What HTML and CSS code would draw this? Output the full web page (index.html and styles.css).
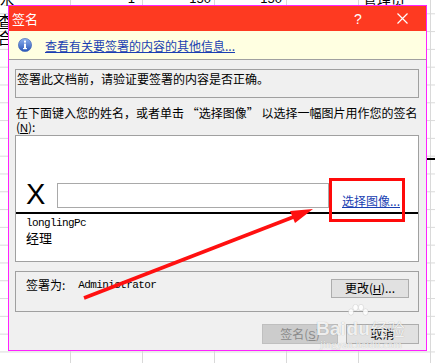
FILE: index.html
```html
<!DOCTYPE html>
<html lang="zh-CN">
<head>
  <meta charset="UTF-8">
  <title>签名</title>
  <link rel="stylesheet" href="styles.css">
</head>
<body>
  <!-- 背景表格 -->
  <div class="sheet">
    <div class="sheet-top">
      <span class="cell c-left">水</span>
      <span class="cell c-right c2">1</span>
      <span class="cell c-right c3">150</span>
      <span class="cell c-right c4">150</span>
      <span class="cell"></span>
      <span class="cell c-left c6">管理员</span>
    </div>
    <div class="sheet-left">
      <span>查</span>
      <span>合</span>
    </div>
  </div>

  <div class="dialog">
    <div class="titlebar">
      <span class="title">签名</span>
      <span class="help">?</span>
      <span class="close">
        <svg width="11" height="11" viewBox="0 0 11 11"><path d="M0.5 0.5 L10.5 10.5 M10.5 0.5 L0.5 10.5" stroke="#fff" stroke-width="1.2" fill="none"/></svg>
      </span>
    </div>
    <div class="infobar">
      <svg class="info-icon" width="14" height="14" viewBox="0 0 14 14">
        <defs>
          <linearGradient id="ig" x1="0" y1="0" x2="0" y2="1">
            <stop offset="0" stop-color="#8fb2ee"/>
            <stop offset="1" stop-color="#2855b8"/>
          </linearGradient>
        </defs>
        <circle cx="7" cy="7" r="6.6" fill="url(#ig)" stroke="#3a62b5" stroke-width="0.6"/>
        <rect x="6" y="2.6" width="2" height="2" fill="#fff"/>
        <rect x="6" y="5.6" width="2" height="5" fill="#fff"/>
        <rect x="5" y="10" width="4" height="1.2" fill="#fff"/>
      </svg>
      <a class="link" href="#">查看有关要签署的内容的其他信息...</a>
    </div>

    <div class="content">
      <div class="notice">签署此文档前，请验证要签署的内容是否正确。</div>
      <div class="prompt">在下面键入您的姓名，或者单击 “选择图像” 以选择一幅图片用作您的签名<br>(<u>N</u>):</div>

      <div class="sigbox">
        <div class="sigline">
          <span class="sig-x">X</span>
          <div class="sig-input"></div>
          <a class="link sig-pick" href="#">选择图像...</a>
        </div>
        <div class="signer-name">longlingPc</div>
        <div class="signer-title">经理</div>
      </div>

      <div class="signas">
        <span class="signas-label">签署为:</span>
        <span class="signas-name">Administrator</span>
        <button class="btn btn-change">更改(<u>H</u>)...</button>
      </div>

      <div class="actions">
        <button class="btn btn-sign" disabled>签名(<u>S</u>)</button>
        <button class="btn btn-cancel">取消</button>
      </div>
    </div>
  </div>

  <!-- 标注 -->
  <div class="callout"></div>
  <svg class="arrow" width="435" height="363" viewBox="0 0 435 363">
    <line x1="84" y1="298" x2="296" y2="216" stroke="#ff1010" stroke-width="3.5"/>
    <polygon points="313,209 290,211 295,223" fill="#ff1010"/>
  </svg>

  <div class="watermark">
    <div class="wm-brand">
      <span class="wm-bai">Bai</span>
      <span class="wm-du-wrap">
        <svg class="wm-paw" width="22" height="16" viewBox="0 0 22 16">
          <ellipse cx="4" cy="8" rx="2.6" ry="3.2"/>
          <ellipse cx="8.5" cy="3.5" rx="2.6" ry="3.2"/>
          <ellipse cx="14" cy="3.5" rx="2.6" ry="3.2"/>
          <ellipse cx="18.5" cy="8" rx="2.6" ry="3.2"/>
        </svg>
        <span class="wm-du">du</span>
      </span>
      <span class="wm-jy">经验</span>
    </div>
    <div class="wm-url">jingyan.baidu.com</div>
  </div>
</body>
</html>
```

FILE: styles.css
```css
/* 基本 */
* {
  box-sizing: border-box;
}
body {
  margin: 0;
  width: 435px;
  height: 363px;
  overflow: hidden;
  position: relative;
  font-family: "Noto Sans CJK SC", sans-serif;
  font-size: 12px;
  color: #000;
  background-color: #fff;
  background-image:
    linear-gradient(#000, #000),
    linear-gradient(to right, #d9d9d9 1px, transparent 1px),
    linear-gradient(to bottom, #d9d9d9 1px, transparent 1px);
  background-size: 9px 2px, 72px 100%, 100% 17.8px;
  background-position: 427px 158px, 70px 0, 0 13.3px;
  background-repeat: no-repeat, repeat-x, repeat-y;
}

/* 背景表格 */
.sheet {
  display: flex;
  flex-direction: column;
  height: 100%;
}
.sheet-top {
  display: flex;
  margin: -8px 0 0 -2px;
  height: 14px;
  line-height: 14px;
  font-size: 14px;
}
.cell {
  flex: none;
  width: 72px;
  white-space: nowrap;
  overflow: hidden;
}
.c-left {
  padding-left: 2px;
}
.c-right {
  text-align: right;
  font-family: "Liberation Sans", sans-serif;
  font-size: 13px;
}
.c2 {
  padding-right: 7px;
}
.c3 {
  padding-right: 3px;
}
.c4 {
  padding-right: 4px;
}
.c6 {
  padding-left: 5px;
}
.sheet-left {
  display: flex;
  flex-direction: column;
  margin: 7px 0 0 -3px;
  font-size: 16px;
  line-height: 16px;
}

/* 对话框 */
.dialog {
  position: absolute;
  left: 8px;
  top: 5px;
  width: 419px;
  height: 346px;
  border: 1px solid #ff22ff;
  background: #f0f0f0;
  display: flex;
  flex-direction: column;
}
.titlebar {
  height: 25px;
  flex: none;
  display: flex;
  align-items: center;
  padding-left: 3px;
  background: #fe3a21;
  color: #fff;
  font-size: 13px;
}
.title {
  flex: 1;
}
.help {
  width: 20px;
  text-align: center;
  margin-right: 10px;
  font-family: "Liberation Sans", sans-serif;
  font-size: 14px;
}
.close {
  width: 48px;
  display: flex;
  justify-content: center;
}
.infobar {
  height: 29px;
  flex: none;
  display: flex;
  align-items: center;
  padding-left: 9px;
  background: #ffffe1;
  border-bottom: 1px solid #a0a0a0;
}
.info-icon {
  flex: none;
}
.link {
  color: #1a3fb2;
  text-decoration: underline;
}
.infobar .link {
  margin-left: 13px;
}

.content {
  padding: 9px 7px 0 6px;
}
.notice {
  height: 29px;
  border: 1px solid #a0a0a0;
  padding: 2px 1px;
  line-height: 14px;
}
.prompt {
  margin-top: 8px;
  padding-left: 1px;
  line-height: 14px;
}
.prompt u {
  font-family: "Liberation Sans", sans-serif;
  font-size: 11px;
}

/* 签名框 */
.sigbox {
  height: 127px;
  border: 1px solid #a0a0a0;
  background: #fff;
}
.sigline {
  height: 78px;
  display: flex;
  align-items: flex-end;
  padding-left: 10px;
  border-bottom: 2px solid #000;
}
.sig-x {
  width: 20px;
  font-family: "Liberation Sans", sans-serif;
  font-size: 29px;
  line-height: 29px;
  margin-bottom: 3px;
}
.sig-input {
  width: 272px;
  height: 25px;
  margin: 0 0 4px 11px;
  border: 1px solid #a9a9a9;
  background: #fff;
}
.sig-pick {
  margin: 0 0 4px 13px;
  line-height: 14px;
}
.signer-name {
  margin-top: 3px;
  padding-left: 10px;
  font-family: "Liberation Mono", monospace;
  font-size: 11px;
  letter-spacing: -0.6px;
  line-height: 13px;
}
.signer-title {
  padding-left: 10px;
  font-size: 13px;
  line-height: 15px;
}

.signas {
  margin-top: 9px;
  height: 41px;
  border: 1px solid #a0a0a0;
  display: flex;
  align-items: flex-start;
  padding: 6px 9px 0 10px;
  line-height: 14px;
}
.signas-name {
  margin-left: 13px;
  font-family: "Liberation Mono", monospace;
  font-size: 11px;
  letter-spacing: -0.6px;
}

/* 按钮 */
.btn {
  font-family: "Noto Sans CJK SC", sans-serif;
  font-size: 12px;
  line-height: 16px;
  padding: 0;
  color: #000;
  background: #e1e1e1;
  border: 1px solid #adadad;
}
.btn u {
  font-family: "Liberation Sans", sans-serif;
  font-size: 11px;
}
.btn-change {
  margin: 1px 0 0 auto;
  width: 78px;
  height: 19px;
}
.actions {
  margin-top: 12px;
  display: flex;
  justify-content: flex-end;
  gap: 8px;
}
.btn-sign {
  width: 76px;
  height: 20px;
  background: #cccccc;
  border-color: #bfbfbf;
  color: #8a8a8a;
}
.btn-cancel {
  width: 73px;
  height: 20px;
}

/* 标注 */
.callout {
  position: absolute;
  left: 329px;
  top: 178px;
  width: 76px;
  height: 44px;
  border: 3px solid #ff0a0a;
}
.arrow {
  position: absolute;
  left: 0;
  top: 0;
  pointer-events: none;
}

/* 水印 */
.watermark {
  position: absolute;
  left: 316px;
  top: 306px;
  color: rgba(255, 255, 255, 0.85);
  text-shadow: 0 0 1px rgba(0, 0, 0, 0.3);
  pointer-events: none;
}
.wm-brand {
  display: flex;
  align-items: flex-end;
  height: 32px;
}
.wm-bai,
.wm-du {
  font-family: "Liberation Sans", sans-serif;
  font-weight: bold;
  font-size: 19px;
  line-height: 18px;
}
.wm-du-wrap {
  display: flex;
  flex-direction: column;
  align-items: center;
  margin-left: 1px;
}
.wm-paw {
  fill: rgba(255, 255, 255, 0.85);
  stroke: rgba(0, 0, 0, 0.15);
  stroke-width: 0.6;
}
.wm-jy {
  font-size: 17px;
  line-height: 18px;
  margin-left: 1px;
}
.wm-url {
  font-family: "Liberation Serif", serif;
  font-size: 11px;
  line-height: 12px;
  padding-left: 4px;
}
```
